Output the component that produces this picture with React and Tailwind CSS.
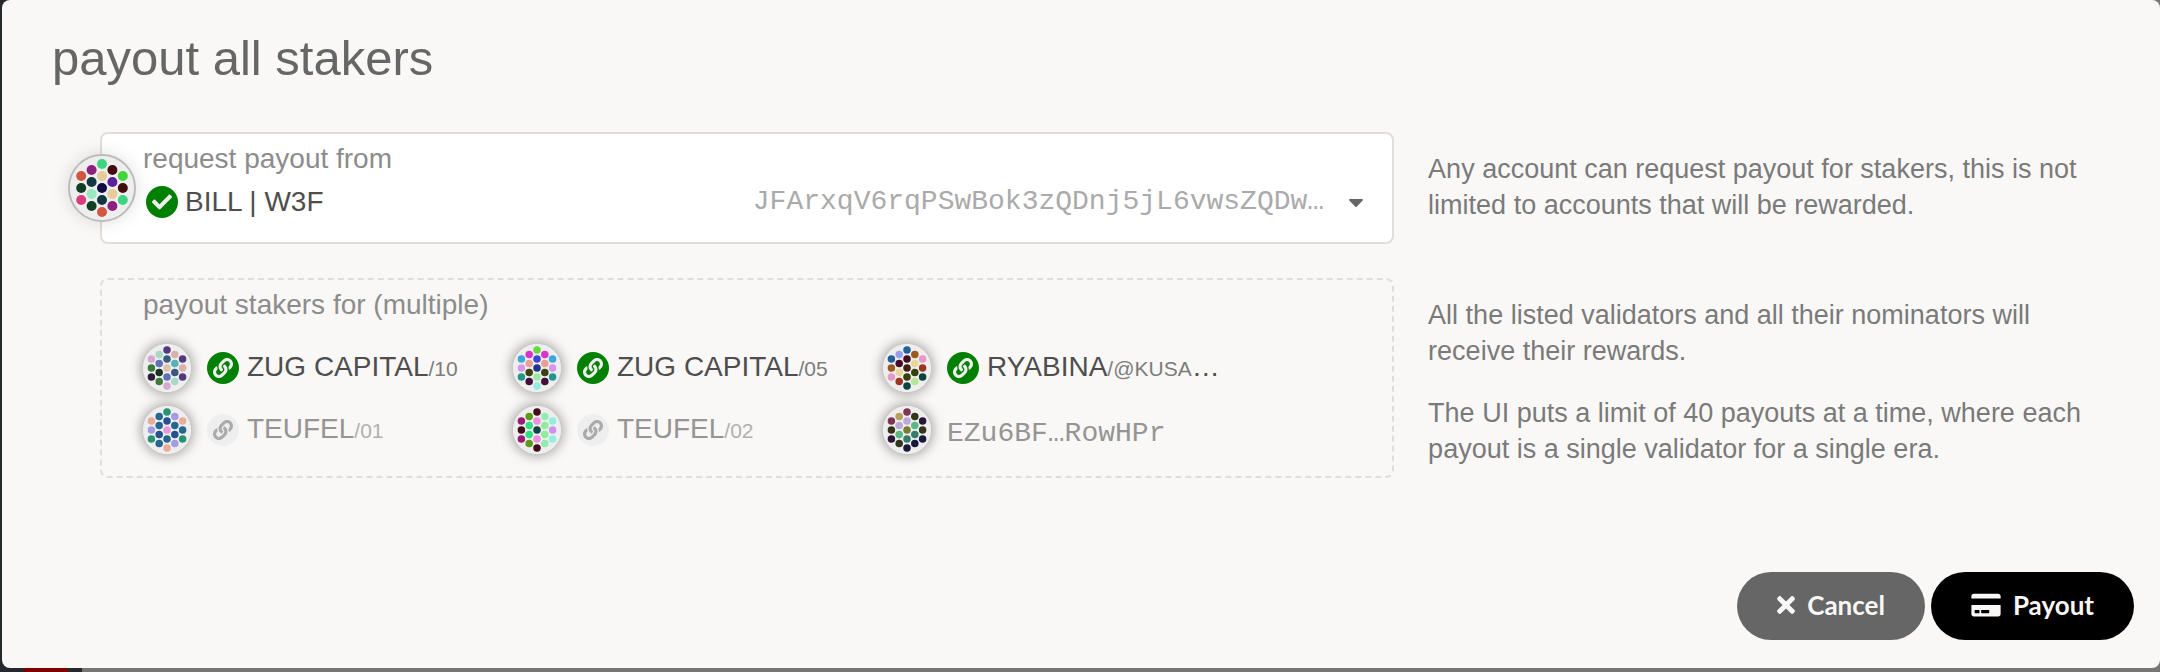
import React from 'react';
import { FaCheck, FaLink, FaTimes, FaCreditCard, FaCaretDown } from 'react-icons/fa';

// Each identicon is a hexagon of 19 dots, listed by column from left to right.
const SENDER_DOTS = [
  ['#d35640', '#113f24', '#d93d7d'],
  ['#8e2080', '#113842', '#98e8c0', '#113f24'],
  ['#3dd57f', '#e6cc96', '#120d45', '#113842', '#d35640'],
  ['#420d0e', '#5a209a', '#e6cc96', '#8e2080'],
  ['#42d53a', '#420d0e', '#3dd57f'],
];

const VALIDATORS = [
  {
    name: 'ZUG CAPITAL', sub: '/10', verified: true,
    dots: [
      ['#d7a9d2', '#3b7c3c', '#2c1d3d'],
      ['#a9d9c6', '#6071b8', '#1c3323', '#3b7c3c'],
      ['#533a7c', '#3a5a7e', '#dcc3aa', '#6071b8', '#d7a9d2'],
      ['#dab0ac', '#57b3b3', '#3a5a7e', '#a9d9c6'],
      ['#533a7c', '#dab0ac', '#533a7c'],
    ],
  },
  {
    name: 'ZUG CAPITAL', sub: '/05', verified: true,
    dots: [
      ['#38a9d8', '#d696ea', '#22978c'],
      ['#d933cd', '#ea9f96', '#3c4212', '#420f3a'],
      ['#6bd939', '#3c45d8', '#22338f', '#98eaa5', '#96eae0'],
      ['#d933cd', '#ea9f96', '#3c4212', '#420f3a'],
      ['#38a9d8', '#d696ea', '#22978c'],
    ],
  },
  {
    name: 'RYABINA', sub: '/@KUSA', more: true, verified: true,
    dots: [
      ['#22629a', '#9a5a22', '#e897c7'],
      ['#9a9fe8', '#420d22', '#e8d897', '#9a3722'],
      ['#22629a', '#420d22', '#42200d', '#36420d', '#0d4242'],
      ['#9a5a22', '#e8d897', '#36420d', '#b5e897'],
      ['#e897c7', '#9a3722', '#0d4242'],
    ],
  },
  {
    name: 'TEUFEL', sub: '/01',
    dots: [
      ['#e8ac98', '#a39ce5', '#289370'],
      ['#25678f', '#25678f', '#25518f', '#25678f'],
      ['#289370', '#25518f', '#e59ada', '#25678f', '#e8ac98'],
      ['#a39ce5', '#25678f', '#25518f', '#a39ce5'],
      ['#e8ac98', '#25678f', '#289370'],
    ],
  },
  {
    name: 'TEUFEL', sub: '/02',
    dots: [
      ['#9a1a75', '#420d16', '#9a1a75'],
      ['#5c9a1a', '#2ee07f', '#2ee07f', '#5c9a1a'],
      ['#420d16', '#ef8fe2', '#0d4642', '#ef8fe2', '#420d16'],
      ['#92ecb2', '#92eb9c', '#92eb9c', '#92ecb2'],
      ['#92eedd', '#cf92ee', '#92eedd'],
    ],
  },
  {
    address: 'EZu6BF…RowHPr',
    dots: [
      ['#7c3654', '#33361b', '#2b1536'],
      ['#b8a05a', '#bba9d8', '#5ab880', '#33361b'],
      ['#7c3654', '#bba9d8', '#7c7c36', '#367c6b', '#15193a'],
      ['#33361b', '#5ab880', '#367c6b', '#15193a'],
      ['#2b1536', '#33361b', '#15193a'],
    ],
  },
];

function Identicon({ dots, className }) {
  return (
    <svg viewBox="0 0 64 64" className={className} aria-hidden="true">
      <circle cx="32" cy="32" r="32" fill="#eeeeee" />
      {dots.map((column, c) =>
        column.map((color, i) => (
          <circle
            key={`${c}-${i}`}
            cx={32 + (c - 2) * 10.4}
            cy={32 + (i - (column.length - 1) / 2) * 12}
            r="5"
            fill={color}
          />
        ))
      )}
    </svg>
  );
}

function Badge({ icon: Icon, active }) {
  return (
    <span
      className={
        active
          ? 'flex size-8 shrink-0 items-center justify-center rounded-full bg-[#008000] text-[#eeeeee]'
          : 'flex size-8 shrink-0 items-center justify-center rounded-full bg-[#eeeeee] text-[#aaaaaa]'
      }
    >
      <Icon className="size-5" aria-hidden="true" />
    </span>
  );
}

function Validator({ name, sub, more, verified, address, dots }) {
  return (
    <li className="flex h-[62px] items-center">
      <Identicon dots={dots} className="mr-4 size-12 shrink-0 rounded-full shadow-[0_0_12px_2px_rgba(0,0,0,0.35)]" />
      {address ? (
        <span className="pt-2 font-['Liberation_Mono',monospace] text-[#959594]">{address}</span>
      ) : (
        <>
          <Badge icon={FaLink} active={verified} />
          <span className={verified ? 'ml-2 text-[#4e4e4e]' : 'ml-2 text-[#959594]'}>
            {name}
            <span className={verified ? 'text-[21px] text-[#7c7c7b]' : 'text-[21px] text-[#b0b0af]'}>{sub}</span>
            {more && '…'}
          </span>
        </>
      )}
    </li>
  );
}

export default function App() {
  return (
    <div className="bg-[linear-gradient(to_right,#26282d_82px,#757575_82px)] pl-[2px] font-['Liberation_Sans',Arial,sans-serif] text-[28px] leading-10 text-[#4e4e4e]">
      <main className="rounded-lg bg-[#f9f8f7] pr-[26px] pb-7">
        <h1 className="pt-[26px] pb-[2px] pl-[50px] text-[49px] leading-[64px] text-[#666666]">payout all stakers</h1>

        <div className="grid grid-cols-[11fr_6fr] gap-x-[34px] gap-y-[34px] pt-10 pl-[98px]">
          <div className="relative h-28 rounded-lg border-2 border-[#dededd] bg-white pl-[41px]">
            <Identicon
              dots={SENDER_DOTS}
              className="absolute top-5 -left-[34px] size-[68px] rounded-full border-2 border-[#bbbbbb] bg-[#eeeeee] shadow-[0_0_16px_2px_rgba(0,0,0,0.1)]"
            />
            <label htmlFor="account" className="block pt-[5px] text-[#8c8c8c]">request payout from</label>
            <div className="flex items-center pt-[3px] pr-6 pl-[3px]">
              <Badge icon={FaCheck} active />
              <select id="account" className="ml-[7px] min-w-0 flex-1 appearance-none bg-transparent text-[#4e4e4e]">
                <option>BILL | W3F</option>
              </select>
              <span className="font-['Liberation_Mono',monospace] text-[#aaaaaa]">
                JFArxqV6rqPSwBok3zQDnj5jL6vwsZQDw…
              </span>
              <FaCaretDown className="ml-5 size-6 text-[#666666]" aria-hidden="true" />
            </div>
          </div>
          <p className="pt-[19px] pr-10 text-[27px] leading-9 text-[#7a7a7a]">
            Any account can request payout for stakers, this is not limited to accounts that will be rewarded.
          </p>

          <section className="h-[200px] rounded-lg border-2 border-dashed border-[#dededd] pl-[41px]">
            <h2 className="pt-[5px] text-[#8c8c8c]">payout stakers for (multiple)</h2>
            <ul className="grid grid-cols-[repeat(3,370px)] pt-3">
              {VALIDATORS.map((v, i) => (
                <Validator key={i} {...v} />
              ))}
            </ul>
          </section>
          <div className="flex flex-col gap-[26px] pt-[19px] pr-10 text-[27px] leading-9 text-[#7a7a7a]">
            <p>All the listed validators and all their nominators will receive their rewards.</p>
            <p>The UI puts a limit of 40 payouts at a time, where each payout is a single validator for a single era.</p>
          </div>
        </div>

        <div className="flex justify-end gap-[6px] pt-[94px] font-[Lato,sans-serif] text-[26px] leading-9 font-bold text-[#f9f8f7]">
          <button type="button" className="flex h-[68px] items-center gap-3 rounded-full bg-[#666666] px-10 pb-[2px]">
            <FaTimes className="h-[26px] w-[18px]" aria-hidden="true" />
            Cancel
          </button>
          <button type="button" className="flex h-[68px] items-center gap-3 rounded-full bg-black px-10 pb-[2px]">
            <FaCreditCard className="h-[26px] w-[30px]" aria-hidden="true" />
            Payout
          </button>
        </div>
      </main>
      <div className="h-1 pl-[22px]">
        <div className="h-1 w-11 bg-[#800000]" />
      </div>
    </div>
  );
}
